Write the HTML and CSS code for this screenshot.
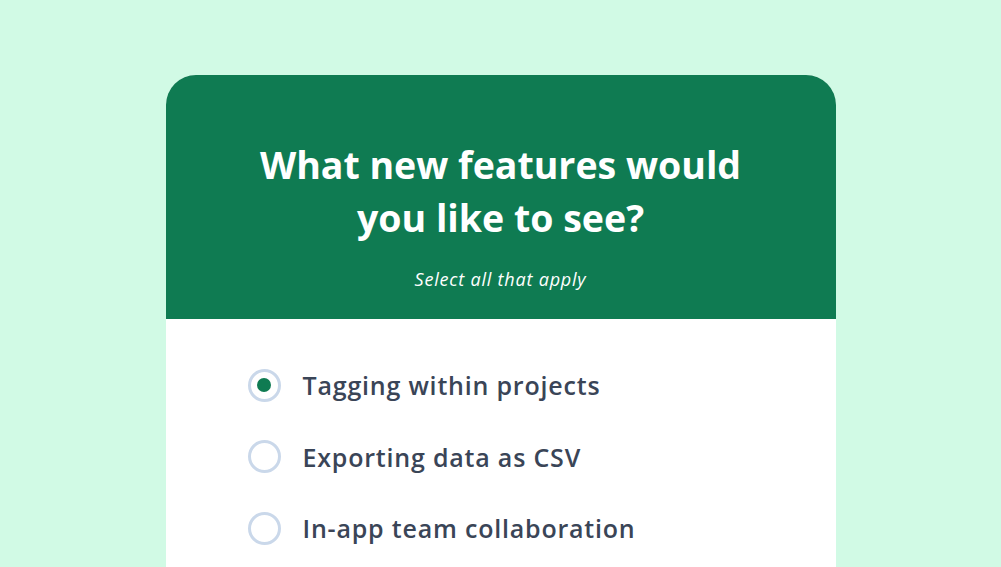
FILE: index.html
```html
<!DOCTYPE html>
<html lang="en">

<head>
    <meta charset="UTF-8">
    <meta name="viewport" content="width=device-width, initial-scale=1.0">
    <title>Survey</title>
    <link rel="stylesheet" href="styles.css">
</head>

<body>
    <!-- Survey card -->
    <div class="card">
        <div class="card-head">
            <h1>What new features would<br>you like to see?</h1>
            <p class="hint">Select all that apply</p>
        </div>
        <div class="options">
            <label class="option">
                <span class="radio checked"></span>
                <span class="label">Tagging within projects</span>
            </label>
            <label class="option">
                <span class="radio"></span>
                <span class="label">Exporting data as CSV</span>
            </label>
            <label class="option">
                <span class="radio"></span>
                <span class="label">In-app team collaboration</span>
            </label>
        </div>
    </div>
</body>

</html>
```

FILE: styles.css
```css
body {
    margin: 0;
    background-color: #d1fae5;
    height: 567px;
    overflow: hidden;
}

.card {
    width: 670px;
    margin: 75px auto 0;
    border-radius: 30px 30px 0 0;
    overflow: hidden;
    background-color: white;
}

.card-head {
    background-color: #0f7b52;
    color: white;
    text-align: center;
    padding: 63px 20px 28px;
}

h1 {
    font-family: "Open Sans", sans-serif;
    font-weight: 700;
    font-size: 37.5px;
    line-height: 53px;
    margin: 0;
}

.hint {
    font-family: "Open Sans", sans-serif;
    font-style: italic;
    font-size: 18px;
    line-height: 24px;
    letter-spacing: 0.8px;
    margin: 23px 0 0;
}

.options {
    display: flex;
    flex-direction: column;
    gap: 31.5px;
    padding: 46px 0 40px 82px;
    height: 300px;
}

.option {
    display: flex;
    align-items: center;
    gap: 22px;
    height: 40px;
}

.radio {
    width: 27px;
    height: 27px;
    border: 3px solid #cad8ea;
    border-radius: 50%;
    display: flex;
    align-items: center;
    justify-content: center;
    flex-shrink: 0;
}

.radio.checked::after {
    content: "";
    width: 14px;
    height: 14px;
    border-radius: 50%;
    background-color: #0f7b52;
}

.label {
    font-family: "Open Sans", sans-serif;
    font-weight: 600;
    font-size: 25px;
    letter-spacing: 0.8px;
    color: #3a4557;
}
```
